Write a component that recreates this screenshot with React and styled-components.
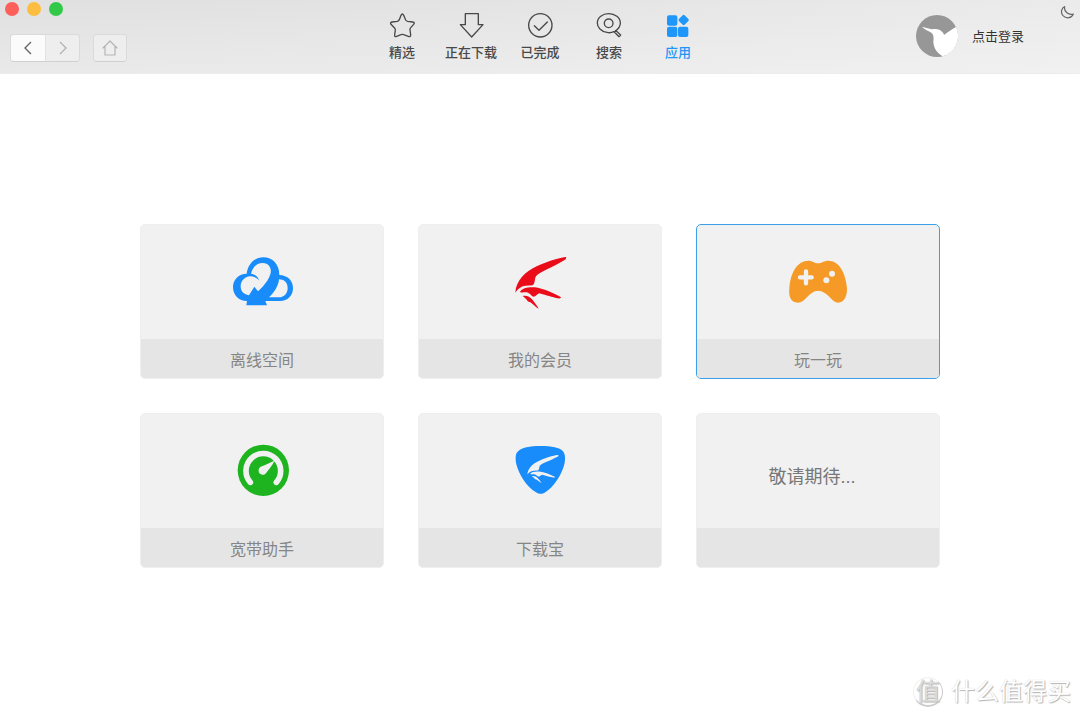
import React from "react";
import styled, { createGlobalStyle } from "styled-components";

const GlobalStyle = createGlobalStyle`
  * { box-sizing: border-box; }
  body {
    margin: 0;
    background: #fff;
    font-family: "Liberation Sans", "Noto Sans CJK SC", sans-serif;
  }
  button { margin: 0; padding: 0; border: 0; background: none; font: inherit; color: inherit; cursor: pointer; }
  a { color: inherit; text-decoration: none; }
  svg { display: block; flex: none; }
`;

const Window = styled.div`
  display: flex;
  flex-direction: column;
  min-height: 100vh;
`;

const Header = styled.header`
  display: grid;
  grid-template-columns: 1fr auto 1fr;
  min-height: 74px;
  background:
    linear-gradient(to bottom, rgba(255, 255, 255, 0), rgba(255, 255, 255, 0.3)),
    linear-gradient(to right, #e0e0e0, #e3e3e3 40%, #ebebeb);
  border-bottom: 1px solid #ececec;
`;

const WindowSide = styled.div`
  display: flex;
  flex-direction: column;
  gap: 18px;
  padding: 2px 5px;
`;

const Lights = styled.div`
  display: flex;
  gap: 8px;
`;

const Light = styled.button`
  width: 14px;
  height: 14px;
  border-radius: 50%;
  background: ${(p) => p.$color};
`;

const Controls = styled.div`
  display: flex;
  gap: 13px;
  padding-left: 5px;
`;

const ControlGroup = styled.div`
  display: flex;
  border: 1px solid #dadada;
  border-bottom-color: #cfcfcf;
  border-radius: 4px;
  overflow: hidden;
`;

const ControlButton = styled.button`
  display: flex;
  align-items: center;
  justify-content: center;
  width: ${(p) => p.$width || 34}px;
  height: 26px;
  background: ${(p) => (p.$active ? "#fbfbfb" : "#eeeeee")};
  color: ${(p) => (p.$active ? "#666" : "#b4b4b4")};
  & + & { border-left: 1px solid #e2e2e2; }
`;

const Nav = styled.nav`
  display: flex;
  padding-top: 12px;
`;

const NavItem = styled.a`
  display: flex;
  flex-direction: column;
  align-items: center;
  gap: 4px;
  width: 69px;
  font-size: 13px;
  line-height: 17px;
  font-weight: 500;
  white-space: nowrap;
  color: ${(p) => (p.$active ? "#1e96fa" : "#484848")};
`;

const Account = styled.div`
  display: flex;
  justify-content: flex-end;
  gap: 36px;
  padding: 5px 6px 0 0;
`;

const Login = styled.button`
  display: flex;
  align-items: center;
  align-self: flex-start;
  gap: 14px;
  margin-top: 10px;
  font-size: 13px;
  line-height: 17px;
  color: #333;
`;

const NightButton = styled.button`
  align-self: flex-start;
`;

const Main = styled.main`
  flex: 1;
  padding: 150px 20px 40px;
`;

const AppGrid = styled.div`
  display: grid;
  grid-template-columns: repeat(3, 1fr);
  gap: 34px;
  max-width: 800px;
  margin: 0 auto;
`;

const Card = styled.a`
  display: flex;
  flex-direction: column;
  border: 1px solid ${(p) => (p.$selected ? "#3ba0e8" : "#efefef")};
  border-radius: 5px;
  overflow: hidden;
  background: #f1f1f1;
`;

const CardBody = styled.div`
  display: flex;
  align-items: center;
  justify-content: center;
  height: 114px;
`;

const CardLabel = styled.div`
  height: 39px;
  padding-top: 10px;
  background: #e5e5e5;
  font-size: 16px;
  line-height: 24px;
  text-align: center;
  color: #858585;
`;

const Coming = styled.span`
  padding: 12px 12px 0 0;
  font-size: 18px;
  line-height: 24px;
  color: #777;
`;

const Footer = styled.footer`
  display: flex;
  align-items: center;
  justify-content: flex-end;
  gap: 8px;
  padding: 0 9px 9px;
  color: #fff;
  text-shadow: 1px 1px 1px #b4b4b4, 0 0 1px #c4c4c4;
`;

const FooterMark = styled.span`
  display: flex;
  align-items: center;
  justify-content: center;
  width: 30px;
  height: 30px;
  border: 1px solid #f0f0f0;
  border-right-color: #ccc;
  border-bottom: 2px solid #ccc;
  border-radius: 50%;
  font-size: 24px;
  line-height: 24px;
  color: #dcdcdc;
`;

const FooterName = styled.span`
  font-size: 24px;
  line-height: 32px;
`;

const NavIcon = ({ x, children, filled }) => (
  <svg
    width="28"
    height="28"
    viewBox={`${x} 36 84 84`}
    fill={filled ? "currentColor" : "none"}
    stroke={filled ? "none" : "currentColor"}
    strokeWidth="4"
    strokeLinejoin="round"
    strokeLinecap="round"
    aria-hidden="true"
  >
    {children}
  </svg>
);

const CardIcon = ({ x, y, color, children }) => (
  <svg width="90" height="70" viewBox={`${x} ${y} 270 210`} fill={color} aria-hidden="true">
    {children}
  </svg>
);

const Swallow = () => (
  <>
    <path d="M198 36C195 34 150 45 110 64C75 80 48 108 46 143C52 132 62 124 76 122L98 121C106 116 103 102 108 94C116 82 160 66 194 45C198 42 200 38 198 36Z" />
    <path d="M60 141C66 129 84 126 104 127C130 130 160 144 183 157C182 162 176 160 168 159C150 155 130 148 118 145C112 147 108 154 102 155C94 154 92 146 84 143C76 140 66 145 60 141Z" />
    <path d="M68 153C80 150 90 156 96 163C104 172 112 184 116 191C106 186 98 176 90 171C82 172 80 160 68 153Z" />
  </>
);

const navItems = [
  {
    label: "精选",
    x: 54,
    icon: <path d="M97 42Q99 42 101 46L107 60Q109 63 113 64L128 66Q136 67 131 73L122 83Q119 86 120 90L122 104Q122 112 115 109L101 104Q97 102 93 104L80 109Q73 112 74 104L76 90Q76 86 73 83L63 73Q59 68 66 66L82 64Q86 63 88 59L93 46Q95 42 97 42Z" />,
  },
  { label: "正在下载", x: 261, icon: <path d="M286 41H325V74H339L305 111L271 74H286Z" /> },
  {
    label: "已完成",
    x: 468,
    icon: (
      <>
        <circle cx="511" cy="76" r="35" />
        <path d="M493 77L507 91L532 66" />
      </>
    ),
  },
  {
    label: "搜索",
    x: 135,
    icon: (
      <>
        <path d="M192 95C185 98 177 99 171 97C153 94 142 82 142 69C142 52 158 41 176 41C195 41 211 53 211 69C211 79 205 87 196 93" />
        <circle cx="176" cy="70" r="13" />
        <path d="M193 96L198 92L212 105L207 110Z" />
      </>
    ),
  },
  {
    label: "应用",
    x: 342,
    active: true,
    icon: (
      <>
        <rect x="351" y="46" width="31" height="31" rx="6" />
        <rect x="351" y="80" width="31" height="31" rx="6" />
        <rect x="384" y="80" width="31" height="31" rx="6" />
        <rect x="389" y="48" width="24" height="24" rx="4" transform="rotate(45 401 60)" />
      </>
    ),
  },
];

const apps = [
  {
    label: "离线空间",
    icon: (
      <CardIcon x={-9} y={6} color="#198cfb">
        <path
          fillRule="evenodd"
          d="M81 168C56 168 39 150 39 126C39 104 56 86 80 86C84 56 104 37 130 37C158 37 178 58 178 90C203 91 219 107 219 129C219 152 203 168 180 168H136L141 181H79ZM93 86C98 66 110 54 128 54C146 54 157 70 151 88C146 104 132 124 114 139L103 125L87 151C70 148 62 138 62 124C62 108 74 95 90 94C102 94 112 99 118 107C113 93 104 88 93 86ZM177 103C192 103 203 113 203 129C203 145 192 157 178 157H147C162 144 176 122 177 103Z"
        />
      </CardIcon>
    ),
  },
  {
    label: "我的会员",
    icon: (
      <CardIcon x={-15} y={6} color="#eb0c19">
        <Swallow />
      </CardIcon>
    ),
  },
  {
    label: "玩一玩",
    selected: true,
    icon: (
      <CardIcon x={-6} y={6} color="#f69a27">
        <path d="M100 47C112 47 118 55 129 55C140 55 147 47 160 47C190 47 212 80 216 130C217 158 204 173 190 173C170 173 158 137 129 137C102 137 92 173 68 173C50 173 40 158 43 130C46 82 68 47 100 47Z" />
        <path d="M75 97H110M93 79V115" stroke="#f1f1f1" strokeWidth="13" strokeLinecap="round" />
        <circle cx="171" cy="86" r="9" fill="#f1f1f1" />
        <circle cx="154" cy="106" r="9" fill="#f1f1f1" />
      </CardIcon>
    ),
  },
  {
    label: "宽带助手",
    icon: (
      <CardIcon x={-9} y={3} color="#1db41f">
        <circle cx="130" cy="106" r="77" />
        <path d="M91 142A52 52 0 1 1 169 142" fill="none" stroke="#f1f1f1" strokeWidth="17" strokeLinecap="round" />
        <path d="M122 95C134 91 150 82 163 77C158 90 148 101 141 110C137 119 128 122 121 117C114 112 114 100 122 95Z" fill="#f1f1f1" />
      </CardIcon>
    ),
  },
  {
    label: "下载宝",
    icon: (
      <CardIcon x={-15} y={3} color="#198cfb">
        <path d="M121 33C155 33 180 38 188 48C196 56 197 72 193 88C186 116 164 154 136 172C126 178 118 178 108 172C80 156 56 118 49 88C46 70 46 56 53 50C64 38 90 33 121 33Z" />
        <g fill="#f1f1f1" transform="translate(54 41) scale(.61 .54)">
          <Swallow />
        </g>
      </CardIcon>
    ),
  },
  { label: "", icon: <Coming>敬请期待...</Coming> },
];

export default function App() {
  return (
    <Window lang="zh-CN">
      <GlobalStyle />
      <Header>
        <WindowSide>
          <Lights>
            <Light $color="#fd5f5b" aria-label="关闭" />
            <Light $color="#fdbd40" aria-label="最小化" />
            <Light $color="#33c948" aria-label="缩放" />
          </Lights>
          <Controls>
            <ControlGroup>
              <ControlButton $active aria-label="后退">
                <svg width="8" height="14" viewBox="0 0 8 14" fill="none" stroke="currentColor" strokeWidth="1.4">
                  <path d="M7 1L1 7L7 13" />
                </svg>
              </ControlButton>
              <ControlButton aria-label="前进">
                <svg width="8" height="14" viewBox="0 0 8 14" fill="none" stroke="currentColor" strokeWidth="1.4">
                  <path d="M1 1L7 7L1 13" />
                </svg>
              </ControlButton>
            </ControlGroup>
            <ControlGroup>
              <ControlButton $width={32} aria-label="主页">
                <svg width="16" height="16" viewBox="0 0 16 16" fill="none" stroke="currentColor" strokeWidth="1.2" strokeLinejoin="round">
                  <path d="M3 6.5L1 8L8 1L15 8L13 6.5M3 6.5V15H13V6.5" />
                </svg>
              </ControlButton>
            </ControlGroup>
          </Controls>
        </WindowSide>
        <Nav>
          {navItems.map((item) => (
            <NavItem key={item.label} href="#" $active={item.active}>
              <NavIcon x={item.x} filled={item.active}>{item.icon}</NavIcon>
              {item.label}
            </NavItem>
          ))}
        </Nav>
        <Account>
          <Login>
            <svg width="42" height="42" viewBox="78 46 126 126" aria-hidden="true">
              <circle cx="141" cy="109" r="63" fill="#979797" />
              <path d="M96 82C108 83 118 88 126 89C138 86 150 88 157 97C160 100 161 102 162 106C174 97 186 88 198 82A63 63 0 0 1 158 170C142 160 130 146 130 125C132 112 130 103 124 99C116 94 104 90 96 82Z" fill="#fff" />
            </svg>
            点击登录
          </Login>
          <NightButton aria-label="夜间模式">
            <svg width="14" height="14" viewBox="510 15 42 42" fill="none" stroke="#666" strokeWidth="3.6" strokeLinejoin="round">
              <path d="M524 20C514 24 511 38 519 47C529 57 545 55 550 42C536 46 521 36 524 20Z" />
            </svg>
          </NightButton>
        </Account>
      </Header>
      <Main>
        <AppGrid>
          {apps.map((app) => (
            <Card key={app.label} href="#" $selected={app.selected}>
              <CardBody>{app.icon}</CardBody>
              <CardLabel>{app.label}</CardLabel>
            </Card>
          ))}
        </AppGrid>
      </Main>
      <Footer>
        <FooterMark>值</FooterMark>
        <FooterName>什么值得买</FooterName>
      </Footer>
    </Window>
  );
}
